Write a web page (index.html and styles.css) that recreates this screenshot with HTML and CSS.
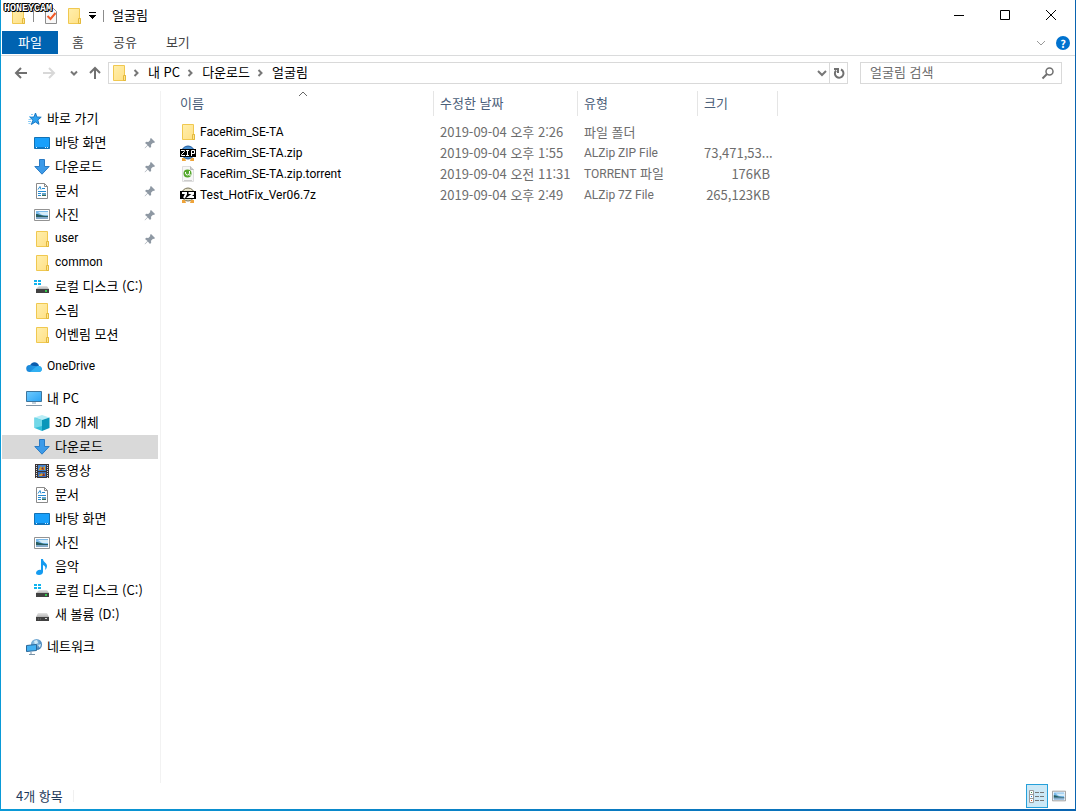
FILE: index.html
```html
<!DOCTYPE html>
<html lang="ko">
<head>
<meta charset="utf-8">
<title>얼굴림</title>
<meta name="viewport" content="width=device-width, initial-scale=1">
<link rel="stylesheet" href="styles.css">
</head>
<body>
<svg class="sprite" aria-hidden="true">
  <defs>
    <linearGradient id="gFolder" x1="0" y1="0" x2="1" y2="1"><stop offset="0" stop-color="#ffefad"/><stop offset="1" stop-color="#ffe085"/></linearGradient>
    <linearGradient id="gCloud" x1="0" y1="0" x2="1" y2="0"><stop offset="0" stop-color="#1a86d8"/><stop offset="1" stop-color="#29a8ef"/></linearGradient>
    <linearGradient id="gScreen" x1="0" y1="0" x2="1" y2="1"><stop offset="0" stop-color="#6fcbff"/><stop offset="1" stop-color="#2aa3f5"/></linearGradient>
    <linearGradient id="gDisk" x1="0" y1="0" x2="0" y2="1"><stop offset="0" stop-color="#e4e4e4"/><stop offset="1" stop-color="#b4b4b4"/></linearGradient>
    <radialGradient id="gGlobe" cx=".4" cy=".35" r=".7"><stop offset="0" stop-color="#a9d6f3"/><stop offset="1" stop-color="#2f72ac"/></radialGradient>
  </defs>
  <symbol id="folder" viewBox="0 0 16 16">
    <path d="M2.5.5h11v10h1v5h-12z" fill="url(#gFolder)" stroke="#f0c850"/>
    <path d="M12.500 15.500v-5h2v5z" fill="#ffe591" stroke="#e3b93c"/>
  </symbol>
  <symbol id="check-doc" viewBox="0 0 16 16">
    <path d="M2.500.500h8l3 3v12h-11z" fill="#f8f8f8" stroke="#8c8c8c"/>
    <path d="M4.500 8l3 3 5-6" fill="none" stroke="#f05a28" stroke-width="2"/>
  </symbol>
  <symbol id="star" viewBox="0 0 16 16">
    <path d="M9.500 2l1.400 4 4.300.200-3.400 2.700 1.200 4.400-3.700-2.400L5.400 13.500l1.500-4.300L4 6.300l4-.300z" fill="#2ea2f0" stroke="#1878c4"/>
    <path d="M5 3.500h2M3 5.500h2M2.500 8.500h3M2 10.500h3M2.500 12.500h2" stroke="#8accf5"/>
  </symbol>
  <symbol id="desktop" viewBox="0 0 16 16">
    <path d="M.500 2.500h15v11H.500z" fill="#18a0fb" stroke="#1272b5"/>
    <path d="M1 12.500h14" stroke="#0b78c8"/><path d="M2 12.500h1M11 12.500h1M13 12.500h1" stroke="#d8f0ff"/>
  </symbol>
  <symbol id="download" viewBox="0 0 16 16"><path d="M5.500.500h5v7h4.700L8 15.200.800 7.500h4.700z" fill="#3d9be9" stroke="#2a7bc4"/></symbol>
  <symbol id="document" viewBox="0 0 16 16">
    <path d="M2.500.500h8l3 3v12h-11z" fill="#fff" stroke="#8a8a8a"/><path d="M10.500.500v3h3" fill="none" stroke="#8a8a8a"/>
    <path d="M4 6.500l2-3 1 3M8 5.500h3M4 8.500h8M4 10.500h3M4 12.500h3" fill="none" stroke="#258bd2"/>
    <path d="M8 10h4v3H8z" fill="#64a4ca"/><path d="M8 12h4v1H8z" fill="#386d55"/>
  </symbol>
  <symbol id="picture" viewBox="0 0 16 16">
    <path d="M.500 2.500h15v11H.500z" fill="#fff" stroke="#939393"/>
    <path d="M2 4h12v8H2z" fill="#79b9ea"/><path d="M4 5h10v3H8z" fill="#d5ecf9"/>
    <path d="M2 7c3 0 5 2 12 2v1H2z" fill="#285e61"/><path d="M2 10h12v2H2z" fill="#84a9c9"/>
  </symbol>
  <symbol id="disk" viewBox="0 0 16 16">
    <path d="M4 6h9l2 4H2z" fill="url(#gDisk)"/>
    <path d="M2 10h13v4H2z" fill="#414141"/><path d="M4 12h1M6 12h1" stroke="#777"/><path d="M11 11h2v1h-2z" fill="#d0d0d0"/>
  </symbol>
  <symbol id="disk-win" viewBox="0 0 16 16">
    <path d="M5 7h8l2 3H2z" fill="url(#gDisk)"/>
    <path d="M2 10h13v4H2z" fill="#414141"/><path d="M11 11h2v2h-2z" fill="#32c74a"/>
    <path d="M0 1h3v2H0zM4 1h3v2H4zM0 4h3v2H0zM4 4h3v2H4z" fill="#10b4ee"/>
  </symbol>
  <symbol id="cloud" viewBox="0 0 16 16">
    <path d="M4 7C5 2 12 2 13 7l-6 2z" fill="#0a5cad"/>
    <path d="M4 13a3.500 3.500 0 0 1-.500-7C6 6 9 8 13 7c4 0 4 6 0 6z" fill="url(#gCloud)"/>
    <path d="M4 13l6-5c2-1 4-1 5 1 2 3-1 4-2 4z" fill="#31b0f2"/>
  </symbol>
  <symbol id="pc" viewBox="0 0 16 16">
    <path d="M.500.500h15v10H.500z" fill="url(#gScreen)" stroke="#3d759d"/>
    <path d="M6 11h4v2H6z" fill="#c3d0da"/><path d="M0 14.500h16" stroke="#8295a6"/>
  </symbol>
  <symbol id="cube" viewBox="0 0 16 16">
    <path d="M8 0l7.500 2.500L8 5 .500 2.500z" fill="#b9edf6"/>
    <path d="M.500 2.500L8 5v11L.500 13z" fill="#34bfda"/><path d="M15.500 2.500L8 5v11l7.500-3z" fill="#0997ba"/>
    <path d="M.500 2.500L8 5v6L.500 13z" fill="#72d8e8"/>
  </symbol>
  <symbol id="video" viewBox="0 0 16 16">
    <path d="M1 1h14v14H1z" fill="#3b3536"/><path d="M4 2h8v6H4z" fill="#4384d0"/><path d="M4 9h8v5H4z" fill="#3970bd"/>
    <path d="M5 6l2-3 1 2 3-2v4H5zM5 12l3-2 1 2 2-2v3H5z" fill="#d49a2e"/><path d="M7 6l2-2 1 3zM8 13l2-3 1 3z" fill="#852c32"/>
    <path d="M2.500 2v13M13.500 2v13" stroke="#ddd" stroke-dasharray="1 1"/>
  </symbol>
  <symbol id="music" viewBox="0 0 16 16">
    <path d="M7 0h2c0 3 4 4 4 7 0 2-1 3-2 4 1-3 0-4-2-5v7c0 2-2 3-4 3s-3-1-3-2c0-2 3-4 5-3z" fill="#149bf0"/>
  </symbol>
  <symbol id="network" viewBox="0 0 16 16">
    <circle cx="10.500" cy="5.500" r="5.500" fill="url(#gGlobe)"/><path d="M8 2l3-1 1 3-3 1M12 6l3-1-1 4z" fill="#d3ecf8"/>
    <path d="M.500 6.500l10-1v6l-10 1z" fill="#43b1f3" stroke="#2a6798"/><path d="M5 13v2m-2 .500h6" stroke="#7892a7"/>
  </symbol>
  <symbol id="pin" viewBox="0 0 12 12">
    <path d="M7 1l4 4-1 1-1-.300-2 2 .200 2L6 11 3.800 8.500 1 11.300H.700V11l2.800-3L1 6l1.300-1.200 2 .200 2-2L6 2z" fill="#8e98a3"/>
  </symbol>
  <symbol id="zip" viewBox="0 0 16 16">
    <circle cx="8" cy="7.500" r="6.500" fill="#4a91d2" stroke="#225b9c"/><path d="M2 13h3l1 3H2zM10 16l1-3h3v3z" fill="#efa43a"/><path d="M0 4h16v8H0z"/>
    <path d="M1 5.500h3.500v1l-3 3v1H5M6 5.500h3M7.500 6v4M6 10.500h3M11.500 11V5.500h3v3h-3" fill="none" stroke="#fff"/>
  </symbol>
  <symbol id="sevenz" viewBox="0 0 16 16">
    <circle cx="8" cy="7.500" r="6.500" fill="#e7e3ca" stroke="#777258"/><path d="M2 13h3l1 3H2zM10 16l1-3h3v3z" fill="#efa43a"/><path d="M0 4h16v8H0z"/>
    <path d="M2 6h4v1L4 11M8.500 6H13v1l-4 3h5" fill="none" stroke="#fff" stroke-width="2"/>
  </symbol>
  <symbol id="torrent" viewBox="0 0 16 16">
    <path d="M2.500.500h8l3 3v12h-11z" fill="#f7f7f7" stroke="#dedede"/><path d="M10.500.500v3h3" fill="#ccc" stroke="#bbb"/>
    <circle cx="7.500" cy="7.500" r="4" fill="#55a82d"/><path d="M5.500 6v1q0 2 2 2t2-2V5M9 9h2" fill="none" stroke="#fff"/><path d="M4 14.500h8" stroke="#ccc"/>
  </symbol>
</svg>

<div class="window">
  <div class="surface">
    <header class="titlebar">
      <div class="quick">
        <svg class="icon"><use href="#folder"/></svg>
        <span class="rule rule-wide"></span>
        <button class="plain" aria-label="속성"><svg class="icon"><use href="#check-doc"/></svg></button>
        <button class="plain" aria-label="새 폴더"><svg class="icon"><use href="#folder"/></svg></button>
        <button class="plain" aria-label="빠른 실행 도구 모음 사용자 지정"><svg class="caret" viewBox="0 0 7 7"><path d="M0 0h7v1H0zM0 3h7v1H6v1H5v1H4v1H3V6H2V5H1V4H0z" shape-rendering="crispEdges"/></svg></button>
        <span class="rule"></span>
      </div>
      <h1 class="title">얼굴림</h1>
      <div class="controls">
        <button class="control" aria-label="최소화"><svg class="glyph" viewBox="0 0 12 12"><path d="M1 6.500h10"/></svg></button>
        <button class="control" aria-label="최대화"><svg class="glyph" viewBox="0 0 12 12"><path d="M1.500 1.500h9v9h-9z"/></svg></button>
        <button class="control" aria-label="닫기"><svg class="glyph" viewBox="0 0 12 12"><path d="M1 1l10 10M11 1L1 11"/></svg></button>
      </div>
      <span class="watermark">HONEYCAM</span>
    </header>

    <nav class="ribbon" aria-label="리본">
      <button class="tab tab-file">파일</button>
      <button class="tab">홈</button>
      <button class="tab">공유</button>
      <button class="tab">보기</button>
      <div class="ribbon-end">
        <button class="plain" aria-label="리본 확장"><svg class="chevron light" viewBox="0 0 10 10"><path d="M1 3l4 4 4-4"/></svg></button>
        <button class="help" aria-label="도움말">?</button>
      </div>
    </nav>

    <div class="navbar">
      <div class="arrows">
        <button class="plain" aria-label="뒤로"><svg class="arrow" viewBox="0 0 14 14"><path d="M7 2L2 7l5 5M2 7h11"/></svg></button>
        <button class="plain" aria-label="앞으로" disabled><svg class="arrow off" viewBox="0 0 14 14"><path d="M7 2l5 5-5 5M12 7H1"/></svg></button>
        <button class="plain recent-button" aria-label="최근 위치"><svg class="recent" viewBox="0 0 8 8"><path d="M1 2.500l3 3 3-3"/></svg></button>
        <button class="plain" aria-label="위로"><svg class="arrow" viewBox="0 0 14 14"><path d="M2 7l5-5 5 5M7 2v11"/></svg></button>
      </div>
      <div class="address">
        <svg class="icon address-icon"><use href="#folder"/></svg>
        <svg class="sep" viewBox="0 0 8 8"><path d="M2.500 1l3 3-3 3"/></svg>
        <a class="crumb" href="#">내 PC</a>
        <svg class="sep" viewBox="0 0 8 8"><path d="M2.500 1l3 3-3 3"/></svg>
        <a class="crumb" href="#">다운로드</a>
        <svg class="sep" viewBox="0 0 8 8"><path d="M2.500 1l3 3-3 3"/></svg>
        <a class="crumb" href="#">얼굴림</a>
        <button class="plain history" aria-label="이전 위치"><svg class="chevron" viewBox="0 0 10 10"><path d="M1 3l4 4 4-4"/></svg></button>
        <button class="refresh" aria-label="새로 고침"><svg class="arrow" viewBox="0 0 14 14"><path d="M9 3.500A4.300 4.300 0 1 1 4 4.500M2 3h4v4"/></svg></button>
      </div>
      <div class="search">
        <input class="search-input" type="text" placeholder="얼굴림 검색" aria-label="얼굴림 검색">
        <svg class="arrow" viewBox="0 0 14 14"><circle cx="8.500" cy="5.500" r="3.500" stroke-width="1.500"/><path d="M6 8l-4.500 4.500"/></svg>
      </div>
    </div>

    <div class="body">
      <nav class="sidebar" aria-label="탐색 창">
        <ul class="group">
          <li><a class="item root" href="#"><svg class="icon"><use href="#star"/></svg>바로 가기</a></li>
          <li><a class="item" href="#"><svg class="icon"><use href="#desktop"/></svg>바탕 화면<svg class="pin"><use href="#pin"/></svg></a></li>
          <li><a class="item" href="#"><svg class="icon"><use href="#download"/></svg>다운로드<svg class="pin"><use href="#pin"/></svg></a></li>
          <li><a class="item" href="#"><svg class="icon"><use href="#document"/></svg>문서<svg class="pin"><use href="#pin"/></svg></a></li>
          <li><a class="item" href="#"><svg class="icon"><use href="#picture"/></svg>사진<svg class="pin"><use href="#pin"/></svg></a></li>
          <li><a class="item latin" href="#"><svg class="icon"><use href="#folder"/></svg>user<svg class="pin"><use href="#pin"/></svg></a></li>
          <li><a class="item latin" href="#"><svg class="icon"><use href="#folder"/></svg>common</a></li>
          <li><a class="item" href="#"><svg class="icon"><use href="#disk-win"/></svg>로컬 디스크 (C:)</a></li>
          <li><a class="item" href="#"><svg class="icon"><use href="#folder"/></svg>스림</a></li>
          <li><a class="item" href="#"><svg class="icon"><use href="#folder"/></svg>어벤림 모션</a></li>
        </ul>
        <ul class="group">
          <li><a class="item root latin" href="#"><svg class="icon"><use href="#cloud"/></svg>OneDrive</a></li>
        </ul>
        <ul class="group">
          <li><a class="item root" href="#"><svg class="icon"><use href="#pc"/></svg>내 PC</a></li>
          <li><a class="item" href="#"><svg class="icon"><use href="#cube"/></svg>3D 개체</a></li>
          <li><a class="item selected" href="#" aria-current="page"><svg class="icon"><use href="#download"/></svg>다운로드</a></li>
          <li><a class="item" href="#"><svg class="icon"><use href="#video"/></svg>동영상</a></li>
          <li><a class="item" href="#"><svg class="icon"><use href="#document"/></svg>문서</a></li>
          <li><a class="item" href="#"><svg class="icon"><use href="#desktop"/></svg>바탕 화면</a></li>
          <li><a class="item" href="#"><svg class="icon"><use href="#picture"/></svg>사진</a></li>
          <li><a class="item" href="#"><svg class="icon"><use href="#music"/></svg>음악</a></li>
          <li><a class="item" href="#"><svg class="icon"><use href="#disk-win"/></svg>로컬 디스크 (C:)</a></li>
          <li><a class="item" href="#"><svg class="icon"><use href="#disk"/></svg>새 볼륨 (D:)</a></li>
        </ul>
        <ul class="group">
          <li><a class="item root" href="#"><svg class="icon"><use href="#network"/></svg>네트워크</a></li>
        </ul>
      </nav>

      <main class="files">
        <table class="table">
          <thead>
            <tr>
              <th class="col-name" scope="col" aria-sort="ascending">이름<svg class="sort" viewBox="0 0 10 6"><path d="M1 5l4-4 4 4"/></svg></th>
              <th class="col-date" scope="col">수정한 날짜</th>
              <th class="col-type" scope="col">유형</th>
              <th class="col-size" scope="col">크기</th>
            </tr>
          </thead>
          <tbody>
            <tr><td><span class="file latin"><svg class="icon"><use href="#folder"/></svg>FaceRim_SE-TA</span></td><td>2019-09-04 오후 2:26</td><td>파일 폴더</td><td></td></tr>
            <tr><td><span class="file latin"><svg class="icon"><use href="#zip"/></svg>FaceRim_SE-TA.zip</span></td><td>2019-09-04 오후 1:55</td><td><span class="latin">ALZip ZIP File</span></td><td>73,471,53...</td></tr>
            <tr><td><span class="file latin"><svg class="icon"><use href="#torrent"/></svg>FaceRim_SE-TA.zip.torrent</span></td><td>2019-09-04 오전 11:31</td><td><span class="latin">TORRENT</span> 파일</td><td>176KB</td></tr>
            <tr><td><span class="file latin"><svg class="icon"><use href="#sevenz"/></svg>Test_HotFix_Ver06.7z</span></td><td>2019-09-04 오후 2:49</td><td><span class="latin">ALZip 7Z File</span></td><td>265,123KB</td></tr>
          </tbody>
        </table>
      </main>
    </div>

    <footer class="status">
      <span class="count">4개 항목</span>
      <div class="views">
        <button class="view active" aria-label="자세히" aria-pressed="true"><svg class="icon" viewBox="0 0 16 16"><path d="M.500 2.500h4v12h-4zM0 6.500h5M0 10.500h5" fill="#fff" stroke="#9a9a9a"/><path d="M2 4h1v1H2z" fill="#3b8f43"/><path d="M2 8h1v1H2z" fill="#1b80d8"/><path d="M2 12h1v1H2z" fill="#e2501b"/><path d="M6 4.500h4m1 0h4M6 8.500h4m1 0h4M6 12.500h4m1 0h4" stroke="#777"/></svg></button>
        <button class="view" aria-label="큰 아이콘" aria-pressed="false"><svg class="icon icon-small"><use href="#picture"/></svg></button>
      </div>
    </footer>
  </div>
</div>
</body>
</html>
```
FILE: styles.css
```css
* {
  box-sizing: border-box;
}

body {
  margin: 0;
  color: #000;
  background: #fff;
  font: 13px/20px "Noto Sans CJK KR", "Noto Sans", sans-serif;
}

button {
  margin: 0;
  padding: 0;
  border: 0;
  color: inherit;
  background: none;
  font: inherit;
}

a {
  color: inherit;
  text-decoration: none;
}

.sprite {
  position: absolute;
  width: 0;
  height: 0;
}

.icon {
  display: block;
  flex: none;
  width: 16px;
  height: 16px;
}

.icon-small {
  width: 14px;
  height: 14px;
}

.plain {
  display: flex;
  align-items: center;
}

.latin {
  font-family: Roboto, "Noto Sans CJK KR", sans-serif;
  font-size: 12px;
}

/* Window frame */
.window {
  display: flex;
  min-height: 100vh;
  padding: 0 1px 2px;
  background: linear-gradient(to right, #0a9ad7, #0a64b0);
}

.surface {
  display: flex;
  flex: 1;
  flex-direction: column;
  min-width: 0;
  background: #fff;
}

/* Title bar */
.titlebar {
  position: relative;
  display: flex;
  align-items: center;
  height: 31px;
  padding: 0 1px 2px 9px;
}

.quick {
  display: flex;
  align-items: center;
  gap: 7px;
  padding-top: 2px;
}

.rule {
  width: 1px;
  height: 12px;
  background: #8c8c8c;
}

.rule-wide {
  margin-right: 2px;
}

.caret {
  width: 7px;
  height: 7px;
}

.title {
  margin: 0 0 0 8px;
  font-size: 13px;
  font-weight: 400;
}

.controls {
  display: flex;
  margin-left: auto;
}

.control {
  display: flex;
  align-items: center;
  justify-content: center;
  width: 46px;
  height: 29px;
}

.glyph {
  width: 12px;
  height: 12px;
  fill: none;
  stroke: #000;
}

.watermark {
  position: absolute;
  top: 3px;
  left: 3px;
  color: #fff;
  font: 700 10px/12px "Liberation Mono", monospace;
  text-shadow: 1px 0 #000, -1px 0 #000, 0 1px #000, 0 -1px #000, 1px 1px #000, -1px -1px #000;
}

/* Ribbon tabs */
.ribbon {
  display: flex;
  height: 25px;
  padding-left: 1px;
  border-bottom: 1px solid #dadbdc;
}

.tab {
  height: 23px;
  padding: 0 14px 2px;
  color: #444;
}

.tab-file {
  width: 56px;
  color: #fff;
  background: #0063b1;
}

.tab + .tab:not(:last-of-type) {
  margin-right: 1px;
}

.ribbon-end {
  display: flex;
  align-items: center;
  gap: 10px;
  margin-left: auto;
  padding-right: 5px;
}

.help {
  width: 14px;
  height: 14px;
  border-radius: 50%;
  color: #fff;
  background: #0072cf;
  font-size: 11px;
  font-weight: 700;
  line-height: 14px;
}

.chevron {
  width: 10px;
  height: 10px;
  fill: none;
  stroke: #777;
  stroke-width: 2;
}

.chevron.light {
  stroke: #999;
  stroke-width: 1;
}

/* Address row */
.navbar {
  display: flex;
  align-items: center;
  padding: 6px 13px;
}

.arrows {
  display: flex;
  align-items: center;
  gap: 14px;
  width: 94px;
}

.recent-button {
  margin-right: -4px;
}

.arrow {
  flex: none;
  width: 14px;
  height: 14px;
  fill: none;
  stroke: #707070;
  stroke-width: 2;
}

.arrow.off {
  stroke: #d8d8d8;
}

.recent,
.sep {
  flex: none;
  width: 8px;
  height: 8px;
  fill: none;
  stroke: #777;
  stroke-width: 2;
}

.address {
  display: flex;
  flex: 1;
  align-items: center;
  height: 22px;
  padding-left: 2px;
  border: 1px solid #d9d9d9;
}

.sep {
  margin: 0 8px 0 6px;
}

.address-icon {
  margin-right: -1px;
}

.crumb {
  padding-bottom: 2px;
}

.history {
  margin-left: auto;
  padding: 0 2px;
}

.refresh {
  display: flex;
  align-items: center;
  justify-content: center;
  width: 18px;
  height: 20px;
  border-left: 1px solid #d9d9d9;
}

.search {
  display: flex;
  align-items: center;
  width: 202px;
  height: 22px;
  margin-left: 12px;
  padding: 0 6px 0 9px;
  border: 1px solid #d9d9d9;
}

.search-input {
  flex: 1;
  min-width: 0;
  padding: 0 0 2px;
  border: 0;
  outline: 0;
  background: none;
  font: inherit;
}

.search-input::placeholder {
  color: #6d6d6d;
  opacity: 1;
}

/* Navigation pane */
.body {
  display: flex;
  flex: 1;
  padding-top: 1px;
}

.sidebar {
  flex: none;
  width: 160px;
  padding: 16px 2px 0 1px;
  border-right: 1px solid #f2f2f2;
}

.group {
  margin: 0 0 8px;
  padding: 0;
  list-style: none;
}

.item {
  display: flex;
  align-items: center;
  gap: 5px;
  height: 24px;
  padding: 0 2px 2px 32px;
}

.item .icon,
.item .pin {
  margin-top: 2px;
}

.item.root {
  padding-left: 24px;
}

.item.selected {
  background: #d9d9d9;
}

.pin {
  width: 12px;
  height: 12px;
  margin-left: auto;
}

/* File list */
.files {
  flex: 1;
  min-width: 0;
  padding-left: 12px;
}

.table {
  width: 605px;
  border-collapse: separate;
  border-spacing: 0;
  table-layout: fixed;
}

.table th {
  position: relative;
  height: 25px;
  padding: 0 6px 2px;
  border-right: 1px solid #e5e5e5;
  color: #4c607a;
  font-weight: 400;
  text-align: left;
}

.col-name {
  width: 261px;
}

.col-date {
  width: 144px;
}

.col-type {
  width: 120px;
}

.col-size {
  width: 80px;
}

.sort {
  position: absolute;
  top: 0;
  left: calc(50% - 5px);
  width: 10px;
  height: 6px;
  fill: none;
  stroke: #666;
}

.table tbody::before {
  display: block;
  height: 5px;
  content: "";
}

.table td {
  height: 21px;
  padding: 0 6px;
  color: #6d6d6d;
  white-space: nowrap;
}

.table td:last-child {
  padding-right: 8px;
  text-align: right;
}

.file {
  display: flex;
  align-items: center;
  gap: 4px;
  color: #000;
}

.table th:first-child,
.table td:first-child {
  padding-left: 7px;
}

/* Status bar */
.status {
  display: flex;
  align-items: center;
  justify-content: space-between;
  height: 26px;
  padding: 0 5px 0 15px;
  color: #1e395b;
}

.count {
  padding-right: 10px;
  border-right: 1px solid #f0f0f0;
  line-height: 12px;
}

.views {
  display: flex;
}

.view {
  display: flex;
  align-items: center;
  justify-content: center;
  width: 22px;
  height: 24px;
  border: 1px solid transparent;
}

.view.active {
  border-color: #26a0da;
  background: #cce8f6;
}
```
